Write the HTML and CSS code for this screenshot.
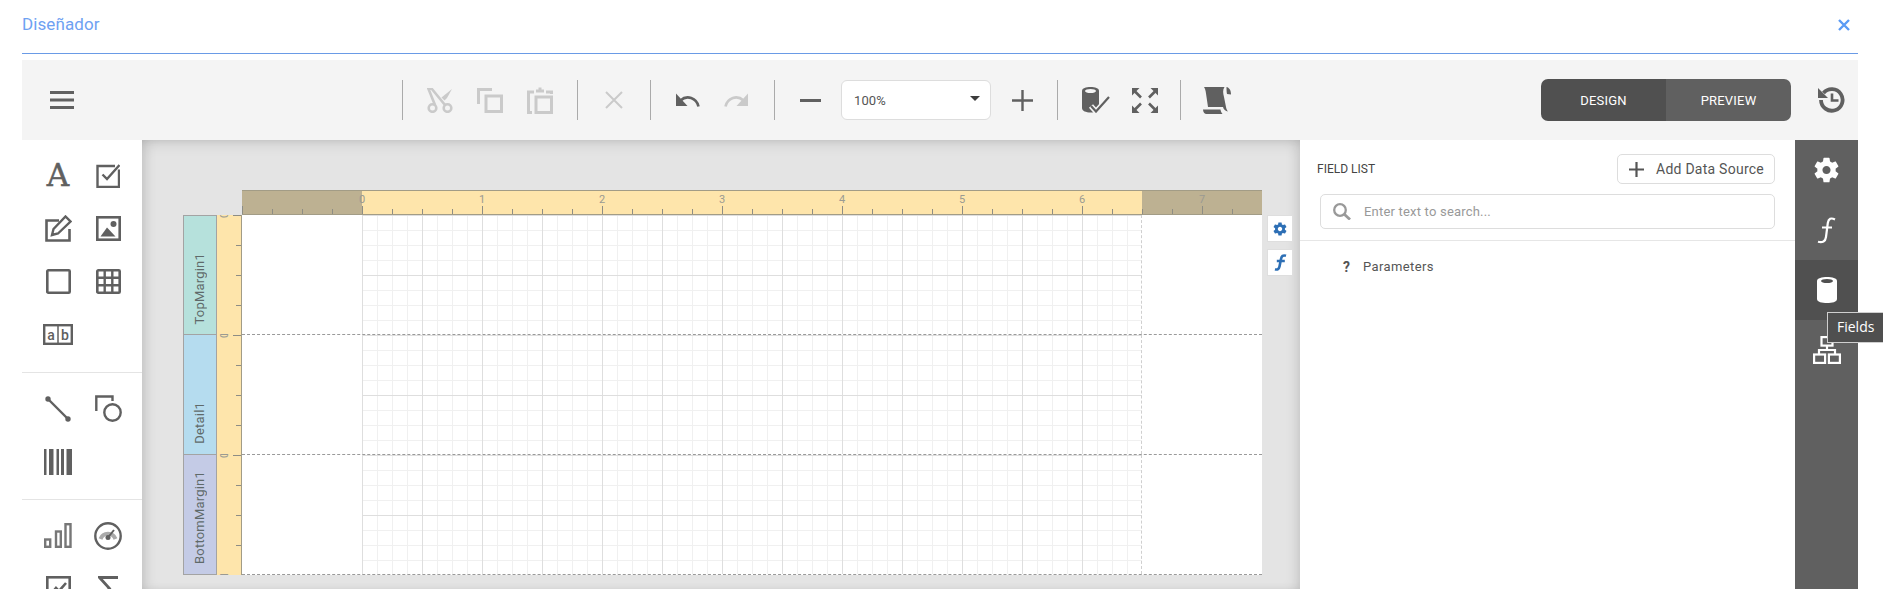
FILE: index.html
```html
<!DOCTYPE html>
<html lang="es">
<head>
<meta charset="utf-8">
<title>Diseñador</title>
<link rel="stylesheet" href="styles.css">
</head>
<body>
<svg class="defs" width="0" height="0" aria-hidden="true">
  <symbol id="gear" viewBox="2.4 1.8 19.2 20.4"><path d="M19.14 12.94c.04-.3.06-.61.06-.94 0-.32-.02-.64-.07-.94l2.03-1.58c.18-.14.23-.41.12-.61l-1.92-3.32c-.12-.22-.37-.29-.59-.22l-2.39.96c-.5-.38-1.03-.7-1.62-.94l-.36-2.54c-.04-.24-.24-.41-.48-.41h-3.84c-.24 0-.43.17-.47.41l-.36 2.54c-.59.24-1.13.57-1.62.94l-2.39-.96c-.22-.08-.47 0-.59.22L2.74 8.87c-.12.21-.08.47.12.61l2.03 1.58c-.05.3-.09.63-.09.94s.02.64.07.94l-2.03 1.58c-.18.14-.23.41-.12.61l1.92 3.32c.12.22.37.29.59.22l2.39-.96c.5.38 1.03.7 1.62.94l.36 2.54c.05.24.24.41.48.41h3.84c.24 0 .44-.17.47-.41l.36-2.54c.59-.24 1.13-.56 1.62-.94l2.39.96c.22.08.47 0 .59-.22l1.92-3.32c.12-.22.07-.47-.12-.61l-2.01-1.58zM12 15.2c-1.77 0-3.2-1.43-3.2-3.2s1.43-3.2 3.2-3.2 3.2 1.43 3.2 3.2-1.43 3.2-3.2 3.2z" fill="currentColor" fill-rule="evenodd"/></symbol>
</svg>
<div class="app">
  <header class="head">
    <span class="title">Diseñador</span>
    <svg class="close" width="12" height="12" viewBox="0 0 12 12"><path d="M1 1l10 10M11 1L1 11" fill="none" stroke="currentColor" stroke-width="2.4"/></svg>
  </header>

  <div class="toolbar">
    <svg class="menu" width="24" height="18" viewBox="0 0 24 18"><path d="M0 1.5h24M0 9h24M0 16.5h24" stroke="currentColor" stroke-width="3"/></svg>

    <div class="tgroup tg-edit">
      <span class="tbtn off"><svg width="26" height="25" viewBox="0 0 26 25" fill="none" stroke="currentColor"><circle cx="5.5" cy="20" r="3.8" stroke-width="2.6"/><circle cx="20.5" cy="20" r="3.8" stroke-width="2.6"/><path d="M8 17L1.500 1l3-.5L18 17" stroke-width="2.6"/><path d="M14.5 9.5L25 1l-5 9-2.500 2.500z" fill="currentColor" stroke="none"/></svg></span>
      <span class="tbtn off"><svg width="26" height="25" viewBox="0 0 26 25" fill="none" stroke="currentColor" stroke-width="3"><rect x="9" y="8" width="15.500" height="15.500"/><path d="M1.500 16V1.500H15"/></svg></span>
      <span class="tbtn off"><svg width="26" height="27" viewBox="0 0 26 27" fill="none" stroke="currentColor" stroke-width="3"><rect x="9" y="10" width="15.500" height="15.500"/><path d="M5 25.500H1.500V5H7M19 5h5.500v2"/><path d="M9 5.500h8V2.500h-2.500V.5h-3v2H9z" fill="currentColor" stroke="none"/></svg></span>
    </div>
    <div class="tgroup tg-del">
      <span class="tbtn off"><svg width="18" height="18" viewBox="0 0 18 18"><path d="M1 1l16 16M17 1L1 17" fill="none" stroke="currentColor" stroke-width="2"/></svg></span>
    </div>
    <div class="tgroup tg-hist">
      <span class="tbtn narrow"><svg width="24" height="14" viewBox="0 0 24 14"><path d="M22.500 13.500C20.500 5 11 1.500 4.500 7.500" fill="none" stroke="currentColor" stroke-width="2.600"/><path d="M0 .5V13h11.500z" fill="currentColor"/></svg></span>
      <span class="tbtn narrow off"><svg width="24" height="14" viewBox="0 0 24 14"><path d="M1.500 13.500C3.500 5 13 1.500 19.500 7.500" fill="none" stroke="currentColor" stroke-width="2.600"/><path d="M24 .5V13H12.500z" fill="currentColor"/></svg></span>
    </div>
    <div class="tgroup tg-zoom">
      <span class="tbtn"><svg width="21" height="3" viewBox="0 0 21 3"><path d="M0 1.500h21" stroke="currentColor" stroke-width="3"/></svg></span>
      <div class="select"><span>100%</span><i class="caret"></i></div>
      <span class="tbtn"><svg width="21" height="21" viewBox="0 0 21 21"><path d="M0 10.500h21M10.500 0v21" stroke="currentColor" stroke-width="2.400"/></svg></span>
    </div>
    <div class="tgroup tg-data">
      <span class="tbtn narrowish"><svg width="28" height="26" viewBox="0 0 28 26"><path d="M0 4C0 1 4 0 8.500 0S17 1 17 4v17c0 3-4 4.500-8.500 4.500S0 24 0 21z" fill="currentColor"/><ellipse cx="8.500" cy="4" rx="5.500" ry="2" fill="#f4f4f4"/><path d="M9 19l5 5.500L27 10" fill="none" stroke="#f4f4f4" stroke-width="5.500"/><path d="M9 19l5 5.500L27 10" fill="none" stroke="currentColor" stroke-width="2.200"/></svg></span>
      <span class="tbtn narrowish"><svg width="26" height="25" viewBox="0 0 26 25"><g fill="none" stroke="currentColor" stroke-width="2.600"><path d="M3 3.500l6 6M23 3.500l-6 6M3 21.500l6-6M23 21.500l-6-6"/></g><g fill="currentColor"><path d="M0 0h7.500L0 7.500z"/><path d="M26 0h-7.500L26 7.500z"/><path d="M0 25h7.500L0 17.500z"/><path d="M26 25h-7.500l7.500-7.500z"/></g></svg></span>
    </div>
    <div class="tgroup tg-script">
      <span class="tbtn"><svg width="28" height="27" viewBox="0 0 28 27" fill="currentColor"><path d="M1 0h20.500c-2 3-1.500 6-.5 10l2 10c.3 1.500.8 3 2 4.500-2.500-.5-4.500-2-5-4.500H5L3 6.500C2.700 3.500 2 1.500 1 0z"/><path d="M23.500 0c2.500.5 4.500 3 4.500 7.500l-4-.5c-.5-2.500-.5-5-.5-7z"/><path d="M0 22.500h17.500c.2 1.800 1 3.300 2 4.500H3.500C1.500 27 0 25 0 22.500z"/></svg></span>
    </div>

    <div class="modes">
      <div class="mode active">DESIGN</div>
      <div class="mode">PREVIEW</div>
    </div>
    <svg class="history" width="27" height="26" viewBox="0 0 27 26"><path d="M5.500 6A10.800 10.800 0 1 1 3 13" fill="none" stroke="currentColor" stroke-width="3.800"/><path d="M0 1v10h10z" fill="currentColor"/><path d="M14 6.500V13.500H20.500" fill="none" stroke="currentColor" stroke-width="2.600"/></svg>
  </div>

  <div class="main">
    <aside class="tools">
      <div class="tool-sec">
        <span class="tool"><span class="glyph-a">A</span></span>
        <span class="tool"><svg width="24" height="24" viewBox="0 0 24 24" fill="none" stroke="currentColor" stroke-width="2.400"><path d="M23 5.500V23H1.500V2H19"/><path d="M6.500 10.500l4.500 4.500L23.500 1"/></svg></span>
        <span class="tool"><svg width="27" height="27" viewBox="0 0 27 27"><path d="M14 5.500H1.500V25.500H24.500V14" fill="none" stroke="currentColor" stroke-width="2.600"/><path d="M7 20l1.500-6L20.500 1.500l5 5L13 18.500z" fill="none" stroke="currentColor" stroke-width="2.400"/></svg></span>
        <span class="tool"><svg width="25" height="25" viewBox="0 0 25 25"><rect x="1.300" y="1.300" width="22.400" height="22.400" fill="none" stroke="currentColor" stroke-width="2.600"/><circle cx="17.500" cy="8" r="3" fill="currentColor"/><path d="M4.500 20.500L11 11.500l8.500 9z" fill="currentColor"/></svg></span>
        <span class="tool"><svg width="25" height="25" viewBox="0 0 25 25"><rect x="1.300" y="1.300" width="22.400" height="22.400" rx="1" fill="none" stroke="currentColor" stroke-width="2.600"/></svg></span>
        <span class="tool"><svg width="25" height="25" viewBox="0 0 25 25"><rect x="1.300" y="1.300" width="22.400" height="22.400" rx="1" fill="none" stroke="currentColor" stroke-width="2.600"/><path d="M8.700 1v23M16.300 1v23M1 8.700h23M1 16.300h23" stroke="currentColor" stroke-width="2.400"/></svg></span>
        <span class="tool"><svg width="30" height="21" viewBox="0 0 30 21"><rect x="1.200" y="1.200" width="27.600" height="18.600" fill="none" stroke="currentColor" stroke-width="2.400"/><path d="M15 1v19" stroke="currentColor" stroke-width="1.500"/><text class="ab" x="8" y="15.500" text-anchor="middle">a</text><text class="ab" x="22" y="15.500" text-anchor="middle">b</text></svg></span>
      </div>
      <div class="tool-sec">
        <span class="tool"><svg width="26" height="26" viewBox="0 0 26 26"><path d="M3 3l20 20" stroke="currentColor" stroke-width="2.400"/><circle cx="3" cy="3" r="2.700" fill="currentColor"/><circle cx="23" cy="23" r="2.700" fill="currentColor"/></svg></span>
        <span class="tool"><svg width="27" height="27" viewBox="0 0 27 27" fill="none" stroke="currentColor" stroke-width="2.400"><path d="M1.300 16V1.500H17.500V6"/><circle cx="17.500" cy="17.500" r="8.200"/></svg></span>
        <span class="tool"><svg width="28" height="26" viewBox="0 0 28 26" fill="currentColor"><rect width="2.500" height="26"/><rect x="5" width="4.500" height="26"/><rect x="12.500" width="2.500" height="26"/><rect x="17" width="3" height="26"/><rect x="22.500" width="5.500" height="26"/></svg></span>
      </div>
      <div class="tool-sec">
        <span class="tool"><svg width="28" height="25" viewBox="0 0 28 25" fill="none" stroke="#777" stroke-width="2.400"><rect x="1.200" y="16.500" width="5" height="7.300"/><rect x="12" y="8.500" width="4.800" height="15.300"/><rect x="21.500" y="1.200" width="5" height="22.600"/></svg></span>
        <span class="tool"><svg width="28" height="28" viewBox="0 0 28 28" fill="none"><circle cx="14" cy="14" r="12.700" stroke="currentColor" stroke-width="2.400"/><path d="M6.500 17A8 8 0 0 1 21.500 17" stroke="#aaa" stroke-width="4"/><path d="M14 15.500L20 8" stroke="currentColor" stroke-width="2"/><circle cx="14" cy="15.500" r="2.500" fill="currentColor"/></svg></span>
        <span class="tool"><svg width="25" height="25" viewBox="0 0 25 25" fill="none" stroke="currentColor" stroke-width="2.600"><rect x="1.300" y="1.300" width="22.400" height="22.400"/><path d="M5 18l5-6 3 3 7-8"/></svg></span>
        <span class="tool"><svg width="21" height="25" viewBox="0 0 21 25" fill="none" stroke="currentColor" stroke-width="2.800"><path d="M20 1.500H1.500l10 11-10 11H20"/></svg></span>
      </div>
    </aside>

    <section class="canvas">
      <div class="report">
        <div class="hruler">
          <span>0</span><span>1</span><span>2</span><span>3</span><span>4</span><span>5</span><span>6</span><span>7</span>
        </div>
        <div class="band">
          <div class="band-label top"><span>TopMargin1</span></div>
          <div class="vruler"><span>0</span><span>1</span></div>
          <div class="surface"><div class="gridarea"></div></div>
        </div>
        <div class="band">
          <div class="band-label detail"><span>Detail1</span></div>
          <div class="vruler"><span>0</span><span>1</span></div>
          <div class="surface"><div class="gridarea"></div></div>
        </div>
        <div class="band">
          <div class="band-label bottom"><span>BottomMargin1</span></div>
          <div class="vruler"><span>0</span><span>1</span></div>
          <div class="surface"><div class="gridarea"></div></div>
        </div>
      </div>
      <div class="quick">
        <span class="qbtn"><svg width="14" height="14"><use href="#gear"/></svg></span>
        <span class="qbtn"><svg width="13" height="17" viewBox="0 0 13 17"><path d="M12 1.800C9 .8 7.600 2 7 5l-1.500 7.500C5 15 3.500 16 1 15.200M2.800 7h8" fill="none" stroke="currentColor" stroke-width="2.600"/></svg></span>
      </div>
    </section>

    <section class="fields">
      <div class="fields-top">
        <span class="fields-title">FIELD LIST</span>
        <div class="add-btn"><svg width="15" height="15" viewBox="0 0 15 15"><path d="M0 7.500h15M7.500 0v15" stroke="currentColor" stroke-width="2.200"/></svg><span>Add Data Source</span></div>
      </div>
      <div class="search">
        <svg width="18" height="17" viewBox="0 0 18 17" fill="none" stroke="currentColor"><circle cx="7" cy="7" r="5.800" stroke-width="2.300"/><path d="M11 11l6 5.500" stroke-width="2.800"/></svg>
        <span>Enter text to search...</span>
      </div>
      <div class="tree">
        <span class="q">?</span><span>Parameters</span>
      </div>
    </section>

    <nav class="tabs">
      <div class="tab"><svg width="27" height="26"><use href="#gear"/></svg></div>
      <div class="tab"><svg width="19" height="27" viewBox="0 0 19 27"><path d="M18 2.500C14 .5 11.500 1.500 10.800 6L9 20c-.6 4.500-3.500 6-8 4.800M5 10.500h10" fill="none" stroke="currentColor" stroke-width="2.200"/></svg></div>
      <div class="tab active">
        <svg width="20" height="26" viewBox="0 0 20 26"><path d="M0 4C0 1 5 0 10 0s10 1 10 4v18c0 3-5 4-10 4S0 25 0 22z" fill="currentColor"/><ellipse cx="10" cy="4" rx="6" ry="2" fill="#505050"/></svg>
        <div class="tooltip">Fields</div>
      </div>
      <div class="tab"><svg width="28" height="28" viewBox="0 0 28 28" fill="none" stroke="currentColor" stroke-width="2.200"><rect x="8.500" y="1.100" width="11" height="8.500"/><path d="M14 10v4M6 18.500V14h16v4.500"/><rect x="1.100" y="18.500" width="11" height="8.400"/><rect x="15.900" y="18.500" width="11" height="8.400"/></svg></div>
    </nav>
  </div>
</div>
</body>
</html>
```
FILE: styles.css
```css
* { box-sizing: border-box; }
html, body { margin: 0; height: 589px; overflow: hidden; background: #fff; }
body { font-family: "Roboto", "Liberation Sans", sans-serif; color: #555; }
.defs { position: absolute; }
svg { display: block; flex: none; }

.app { padding: 0 25px 0 22px; }

.head {
  height: 54px;
  border-bottom: 1px solid #6a9be6;
  display: flex;
  justify-content: space-between;
  padding: 14px 8px 0 0;
}
.title { color: #6ea1f2; font-size: 17px; line-height: 20px; letter-spacing: .1px; }
.close { color: #5b9bf5; margin-top: 5px; }

.toolbar {
  margin-top: 6px;
  height: 80px;
  background: #f4f4f4;
  display: flex;
  align-items: center;
  padding: 0 13px 0 28px;
  color: #606060;
}
.menu { color: #606060; }
.tgroup {
  height: 40px;
  border-left: 1px solid #aaa;
  display: flex;
  align-items: center;
}
.tg-edit { margin-left: 328px; padding: 0 12px 0 12px; }
.tg-del { padding: 0 11px 0 11px; }
.tg-hist { padding: 0 14px 0 13px; }
.tg-zoom { padding: 0 10px 0 10px; gap: 6px; }
.tg-data { padding: 0 11px 0 13px; }
.tg-script { padding: 0 0 0 11px; }
.tbtn {
  width: 50px;
  height: 40px;
  display: flex;
  align-items: center;
  justify-content: center;
}
.tbtn.narrow { width: 48px; }
.tbtn.narrowish { width: 49px; }
.tbtn.off { color: #cacaca; }
.select {
  width: 150px;
  height: 40px;
  background: #fff;
  border: 1px solid #ddd;
  border-radius: 6px;
  display: flex;
  align-items: center;
  justify-content: space-between;
  padding: 0 10px 0 12px;
  font-size: 13px;
  letter-spacing: .1px;
  color: #555;
}
.caret {
  border-left: 5px solid transparent;
  border-right: 5px solid transparent;
  border-top: 5px solid #3c3c3c;
  margin-bottom: 3px;
}
.modes {
  margin-left: auto;
  width: 250px;
  height: 42px;
  border-radius: 7px;
  overflow: hidden;
  display: flex;
  color: #fff;
  font-size: 13px;
  letter-spacing: .2px;
}
.mode {
  flex: 1;
  background: #606060;
  display: flex;
  align-items: center;
  justify-content: center;
}
.mode.active { background: #505050; }
.history { margin-left: 27px; color: #606060; }

.main { height: 449px; display: flex; }

.tools { width: 120px; flex: none; color: #606060; overflow: hidden; }
.tool-sec {
  display: grid;
  grid-template-columns: 50px 50px;
  grid-auto-rows: 53px;
  padding: 9px 0 11px 11px;
  border-bottom: 1px solid #e4e4e4;
}
.tool-sec:last-child { border-bottom: 0; }
.tool { display: flex; align-items: center; justify-content: center; }
.glyph-a {
  font-family: "DejaVu Serif", "Liberation Serif", serif;
  font-size: 31px;
  line-height: 31px;
  color: #606060;
  -webkit-text-stroke: .5px #606060;
}
.ab { font-family: "Roboto", sans-serif; font-size: 14px; font-weight: 500; fill: #606060; }

.canvas {
  flex: none;
  width: 1158px;
  height: 449px;
  overflow: hidden;
  background: #e4e4e4;
  box-shadow: inset 0 8px 16px -6px rgba(0, 0, 0, .12), inset 8px 0 14px -6px rgba(0, 0, 0, .14), inset -8px 0 14px -6px rgba(0, 0, 0, .12);
  display: flex;
  align-items: flex-start;
  padding: 50px 0 0 41px;
}
.report { width: 1079px; flex: none; }
.hruler {
  margin-left: 59px;
  height: 25px;
  border: 1px solid #a29c86;
  border-width: 1px 0;
  display: flex;
  padding-left: 60px;
  color: #9a9a92;
  font-size: 11px;
  line-height: 17px;
  background:
    linear-gradient(90deg, #8d8d85 1px, transparent 1px) 0 100% / 120px 8px repeat-x,
    linear-gradient(90deg, #8d8d85 1px, transparent 1px) 0 100% / 30px 5px repeat-x,
    linear-gradient(90deg, #bdb192 120px, #fee5ab 120px, #fee5ab 900px, #bdb192 900px);
}
.hruler span { width: 120px; flex: none; text-align: center; }
.band {
  display: grid;
  grid-template-columns: 34px 25px 1020px;
  grid-template-rows: 120px;
  height: 120px;
}
.band-label {
  border: 1px solid #a3a3a3;
  border-width: 0 1px 1px 1px;
  display: flex;
  justify-content: center;
  align-items: flex-end;
  padding-bottom: 10px;
  overflow: hidden;
}
.band-label span {
  writing-mode: vertical-rl;
  transform: rotate(180deg);
  line-height: 32px;
  font-size: 13px;
  letter-spacing: .2px;
  color: #5f6a6a;
}
.band-label.top { background: #b6e1dc; border-top-width: 1px; }
.band-label.detail { background: #b5dcef; }
.band-label.bottom { background: #c4cbe6; }
.vruler {
  border-right: 1px solid #a29c86;
  overflow: hidden;
  display: flex;
  flex-direction: column;
  justify-content: space-between;
  align-items: flex-start;
  padding-left: 4px;
  color: #9a9a92;
  font-size: 11px;
  background:
    linear-gradient(#8d8d85 1px, transparent 1px) 100% 0 / 8px 120px repeat-y,
    linear-gradient(#8d8d85 1px, transparent 1px) 100% 0 / 5px 30px repeat-y,
    #fee5ab;
}
.vruler span {
  display: block;
  width: 8px;
  height: 8px;
  line-height: 8px;
  text-align: center;
  transform: rotate(-90deg);
  margin: -4px 0;
}
.surface {
  background: #fff;
  padding: 0 120px;
  border-bottom: 1px dashed #9a9a9a;
  display: flex;
}
.gridarea {
  flex: 1;
  border-right: 1px dashed #cfcfcf;
  background:
    linear-gradient(90deg, #dedede 1px, transparent 1px) 0 0 / 60px 100%,
    linear-gradient(#dedede 1px, transparent 1px) 0 0 / 100% 60px,
    linear-gradient(90deg, #f0f0f0 1px, transparent 1px) 0 0 / 15px 100%,
    linear-gradient(#f0f0f0 1px, transparent 1px) 0 0 / 100% 15px;
}
.quick {
  margin: 25px 0 0 5px;
  display: flex;
  flex-direction: column;
  gap: 7px;
}
.qbtn {
  width: 26px;
  height: 27px;
  background: #fff;
  border: 1px solid #dedede;
  display: flex;
  align-items: center;
  justify-content: center;
  color: #2d6fb5;
}

.fields { flex: none; width: 495px; background: #fff; }
.fields-top {
  height: 44px;
  display: flex;
  align-items: flex-end;
  justify-content: space-between;
  padding: 0 20px 0 17px;
}
.fields-title { font-size: 12px; line-height: 30px; color: #444; }
.add-btn {
  width: 158px;
  height: 30px;
  border: 1px solid #ddd;
  border-radius: 5px;
  display: flex;
  align-items: center;
  gap: 12px;
  padding-left: 11px;
  font-size: 14px;
  letter-spacing: .25px;
  color: #555;
}
.search {
  margin: 10px 20px 0;
  width: 455px;
  height: 35px;
  border: 1px solid #ddd;
  border-radius: 5px;
  display: flex;
  align-items: center;
  gap: 13px;
  padding-left: 12px;
  font-size: 13px;
  letter-spacing: .2px;
  color: #999;
}
.tree {
  margin-top: 11px;
  border-top: 1px solid #e6e6e6;
  padding: 17px 0 0 43px;
  display: flex;
  align-items: center;
  font-size: 13px;
  letter-spacing: .4px;
  line-height: 18px;
}
.q { width: 20px; font-size: 14px; font-weight: 700; color: #555; }

.tabs { flex: none; width: 63px; background: #606060; color: #fff; }
.tab {
  height: 60px;
  display: flex;
  align-items: center;
  justify-content: center;
  position: relative;
}
.tab.active { background: #505050; }
.tooltip {
  position: absolute;
  left: 32px;
  top: 52px;
  width: 56px;
  height: 31px;
  background: #4f4f4f;
  border: 1px solid #cfcfcf;
  border-right: 0;
  font-family: "Open Sans", sans-serif;
  font-size: 14px;
  line-height: 28px;
  padding-left: 9px;
  color: #fff;
  z-index: 2;
}
```
